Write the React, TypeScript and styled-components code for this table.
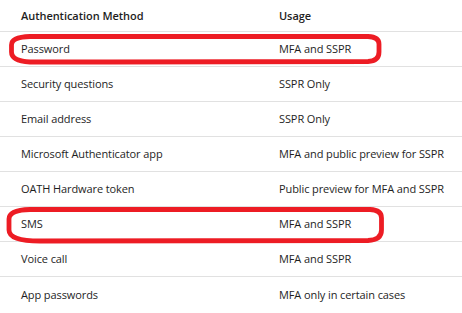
import React from "react";
import styled, { createGlobalStyle } from "styled-components";

const Global = createGlobalStyle`
  html, body { margin: 0; padding: 0; background: #ffffff; }
  body { font-family: "Open Sans", "Noto Sans", sans-serif; color: #1e1e1e; }
`;

const Page = styled.div`
  position: relative;
  width: 462px;
  height: 313px;
  overflow: hidden;
  background: #fff;
`;

const Table = styled.div`
  display: grid;
  grid-template-columns: 279px 1fr;
`;

const Cell = styled.div<{ $first?: boolean; $head?: boolean; $last?: boolean }>`
  height: ${(p) => (p.$head ? 32 : 35)}px;
  box-sizing: border-box;
  display: flex;
  align-items: center;
  padding-left: ${(p) => (p.$first ? 21 : 0)}px;
  padding-bottom: 1px;
  border-bottom: ${(p) => (p.$last ? "none" : "1px solid #e1e1e1")};
  font-size: 11px;
  font-weight: ${(p) => (p.$head ? 600 : 400)};
  letter-spacing: ${(p) => (p.$head ? "-0.05px" : "-0.1px")};
  white-space: nowrap;
`;

const Overlay = styled.svg`
  position: absolute;
  left: 0;
  top: 0;
  pointer-events: none;
`;

const rows: [string, string][] = [
  ["Password", "MFA and SSPR"],
  ["Security questions", "SSPR Only"],
  ["Email address", "SSPR Only"],
  ["Microsoft Authenticator app", "MFA and public preview for SSPR"],
  ["OATH Hardware token", "Public preview for MFA and SSPR"],
  ["SMS", "MFA and SSPR"],
  ["Voice call", "MFA and SSPR"],
  ["App passwords", "MFA only in certain cases"],
];

export default function App() {
  return (
    <Page>
      <Global />
      <Table>
        <Cell $first $head>Authentication Method</Cell>
        <Cell $head>Usage</Cell>
        {rows.map(([a, b], i) => (
          <React.Fragment key={a}>
            <Cell $first $last={i === rows.length - 1}>{a}</Cell>
            <Cell $last={i === rows.length - 1}>{b}</Cell>
          </React.Fragment>
        ))}
      </Table>
      <Overlay width={462} height={313} viewBox="0 0 462 313">
        <path
          d="M 30 36.5 L 368 36.5 Q 379 37 379 44 L 379 52 Q 379 61 368 61.5 L 110 62 Q 50 62 30 62 Q 11.5 61 11.5 52 L 11.5 45 Q 11.5 37 30 36.5 Z"
          fill="none"
          stroke="#ed1c24"
          strokeWidth={4.8}
          strokeLinejoin="round"
        />
        <path
          d="M 30 209.5 L 370 209.5 Q 381.5 210 381.5 218 L 381.5 230 Q 381.5 240 368 240.5 L 40 241 Q 9 241 9 230 L 9 219 Q 9 210 30 209.5 Z"
          fill="none"
          stroke="#ed1c24"
          strokeWidth={4.8}
          strokeLinejoin="round"
        />
      </Overlay>
    </Page>
  );
}
